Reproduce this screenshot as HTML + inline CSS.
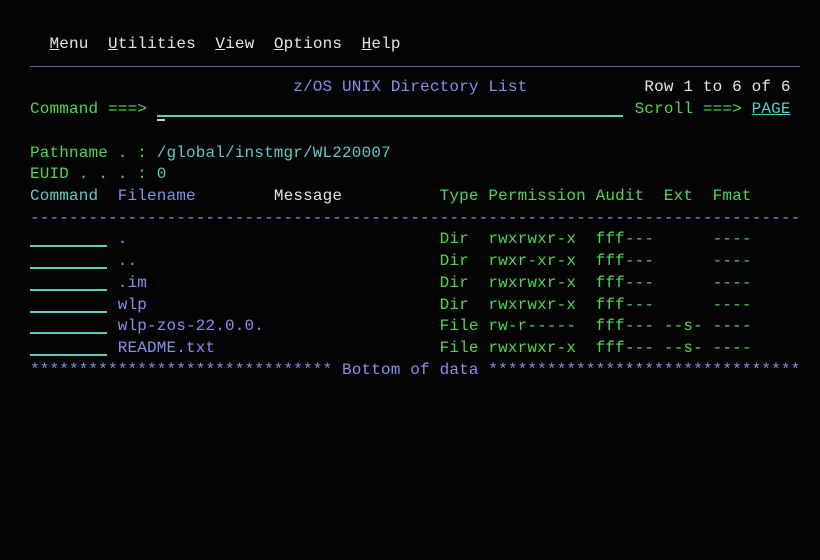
<!DOCTYPE html>
<html><head><meta charset="utf-8"><style>
html,body{margin:0;padding:0;background:#040404;width:820px;height:560px;overflow:hidden}
.r{position:absolute;left:30px;height:22px;line-height:22px;font-family:"Liberation Mono",monospace;font-size:16px;letter-spacing:0.15px;white-space:pre;color:#52d552}
.g{color:#52d552}.b{color:#8393ea}.t{color:#5fcdc4}.w{color:#e6e6e6}
.u{text-decoration:underline}
.ln{position:absolute;height:2px;background:#5fcdc4}
</style></head><body>
<div class="r w" style="top:33px">  <span class="u">M</span>enu  <span class="u">U</span>tilities  <span class="u">V</span>iew  <span class="u">O</span>ptions  <span class="u">H</span>elp</div>
<div style="position:absolute;left:30px;top:66px;width:770px;height:1px;background:#5a6fb0"></div>
<div class="r" style="top:76px"><span class="b">                           z/OS UNIX Directory List</span><span class="w">            Row 1 to 6 of 6</span></div>
<div class="r" style="top:98px"><span class="g">Command ===></span>                                                  <span class="g">Scroll ===></span> <span class="t u">PAGE</span></div>
<div class="ln" style="left:157px;top:115px;width:466px"></div>
<div style="position:absolute;left:157px;top:119px;width:8px;height:2px;background:#ccc"></div>
<div class="r" style="top:142px"><span class="g">Pathname . : </span><span class="t">/global/instmgr/WL220007</span></div>
<div class="r" style="top:163px"><span class="g">EUID . . . : </span><span class="t">0</span></div>
<div class="r" style="top:185px"><span class="t">Command</span>  <span class="b">Filename</span>        <span class="w">Message</span>          <span class="g">Type Permission Audit  Ext  Fmat</span></div>
<div class="r b" style="top:207px">-------------------------------------------------------------------------------</div>
<div class="r" style="top:228px">         <span class="b">.</span>                                <span class="g">Dir  rwxrwxr-x  fff---      ----</span></div>
<div class="r" style="top:250px">         <span class="b">..</span>                               <span class="g">Dir  rwxr-xr-x  fff---      ----</span></div>
<div class="r" style="top:272px">         <span class="b">.im</span>                              <span class="g">Dir  rwxrwxr-x  fff---      ----</span></div>
<div class="r" style="top:294px">         <span class="b">wlp</span>                              <span class="g">Dir  rwxrwxr-x  fff---      ----</span></div>
<div class="r" style="top:315px">         <span class="b">wlp-zos-22.0.0.</span>                  <span class="g">File rw-r-----  fff--- --s- ----</span></div>
<div class="r" style="top:337px">         <span class="b">README.txt</span>                       <span class="g">File rwxrwxr-x  fff--- --s- ----</span></div>
<div class="ln" style="left:30px;top:245px;width:77px"></div>
<div class="ln" style="left:30px;top:267px;width:77px"></div>
<div class="ln" style="left:30px;top:289px;width:77px"></div>
<div class="ln" style="left:30px;top:311px;width:77px"></div>
<div class="ln" style="left:30px;top:332px;width:77px"></div>
<div class="ln" style="left:30px;top:354px;width:77px"></div>
<div class="r b" style="top:359px">******************************* Bottom of data ********************************</div>
</body></html>
